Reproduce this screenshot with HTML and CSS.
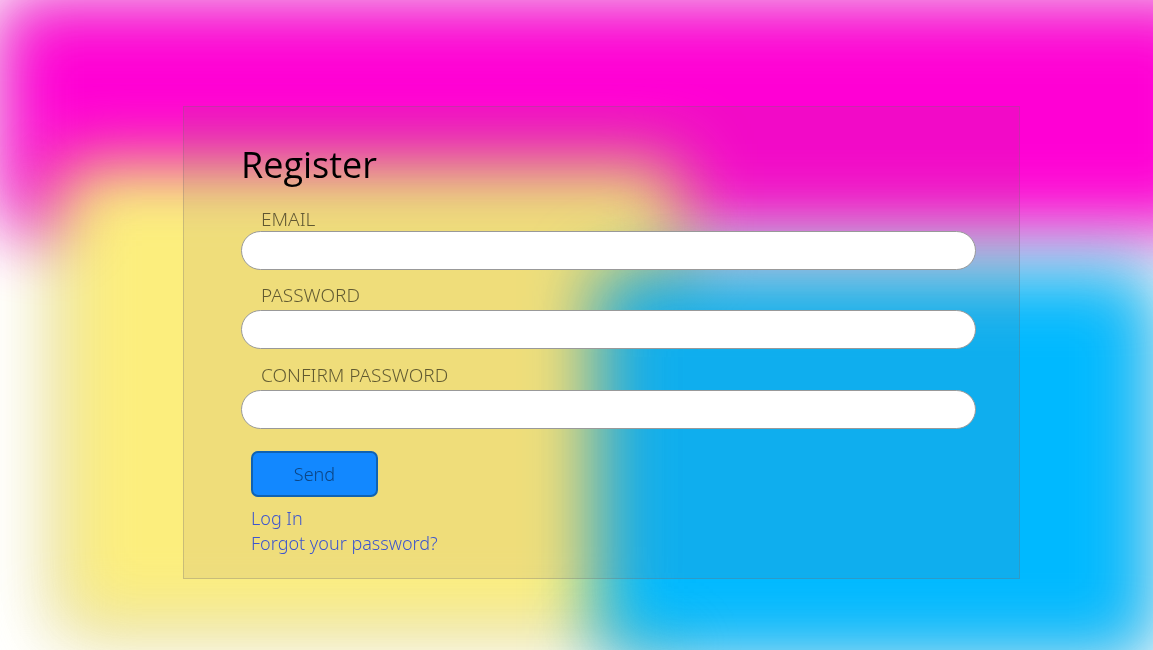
FILE: index.html
```html
<!DOCTYPE html>
<html lang="en">
<head>
<meta charset="utf-8">
<meta name="viewport" content="width=device-width, initial-scale=1">
<title>Register</title>
<link rel="stylesheet" href="styles.css">
</head>
<body>
<div class="backdrop" aria-hidden="true">
  <div class="glow glow-magenta"></div>
  <div class="glow glow-yellow"></div>
  <div class="glow glow-blue"></div>
</div>
<main class="page">
  <form class="panel">
    <h1 class="title">Register</h1>
    <div class="field field-first">
      <label class="label" for="email">EMAIL</label>
      <input class="input" id="email" type="email">
    </div>
    <div class="field">
      <label class="label" for="password">PASSWORD</label>
      <input class="input" id="password" type="password">
    </div>
    <div class="field">
      <label class="label" for="confirm">CONFIRM PASSWORD</label>
      <input class="input" id="confirm" type="password">
    </div>
    <div class="actions">
      <button class="send" type="submit">Send</button>
      <a class="link" href="#login">Log In</a>
      <a class="link" href="#forgot">Forgot your password?</a>
    </div>
  </form>
</main>
</body>
</html>
```
FILE: styles.css
```css
* {
  box-sizing: border-box;
}

body {
  margin: 0;
  min-height: 100vh;
  background: #fff;
  font-family: "Segoe UI", "Noto Sans", "Open Sans", sans-serif;
  font-size: 18px;
  font-weight: 300;
  line-height: 25px;
}

.backdrop {
  position: fixed;
  inset: 0;
  overflow: hidden;
}

.glow {
  position: absolute;
  filter: blur(35px) drop-shadow(0 0 2px rgba(0, 0, 0, 0.16));
}

.glow-magenta {
  inset: 0 -6% 65% 0;
  background: #ff00d4;
}

.glow-yellow {
  inset: 25% 41% 3% 5%;
  background: #fcee7d;
}

.glow-blue {
  inset: 42% 0 -1% 52%;
  background: #00b9ff;
}

.page {
  position: relative;
  padding: 106px 133px 71px 183px;
}

.panel {
  display: flex;
  flex-direction: column;
  padding: 34px 43px 22px 57px;
  background: rgba(140, 94, 104, 0.11);
  border: 1px solid rgba(112, 112, 112, 0.3);
}

.title {
  margin: 0 0 18px;
  font-size: 36px;
  font-weight: 400;
  font-family: "Segoe UI", "Open Sans", "Noto Sans", sans-serif;
  line-height: 48px;
}

.field {
  display: flex;
  flex-direction: column;
  gap: 3px;
  margin-bottom: 14px;
}

.field-first {
  gap: 0;
  margin-bottom: 13px;
}

.label {
  padding-left: 20px;
  color: rgba(0, 0, 0, 0.6);
  font-size: 19px;
  line-height: 24px;
}

.input {
  width: 100%;
  height: 39px;
  padding: 0 20px;
  border: 1px solid #999;
  border-radius: 20px;
  background: #fff;
  font: inherit;
}

.actions {
  display: flex;
  flex-direction: column;
  align-items: flex-start;
  padding: 8px 10px 0;
}

.send {
  width: 127px;
  height: 46px;
  margin-bottom: 9px;
  border: 2px solid #0f62b2;
  border-radius: 7px;
  background: #1288ff;
  color: #0c4584;
  font: inherit;
}

.link {
  color: #3d55cf;
  text-decoration: none;
}
```
